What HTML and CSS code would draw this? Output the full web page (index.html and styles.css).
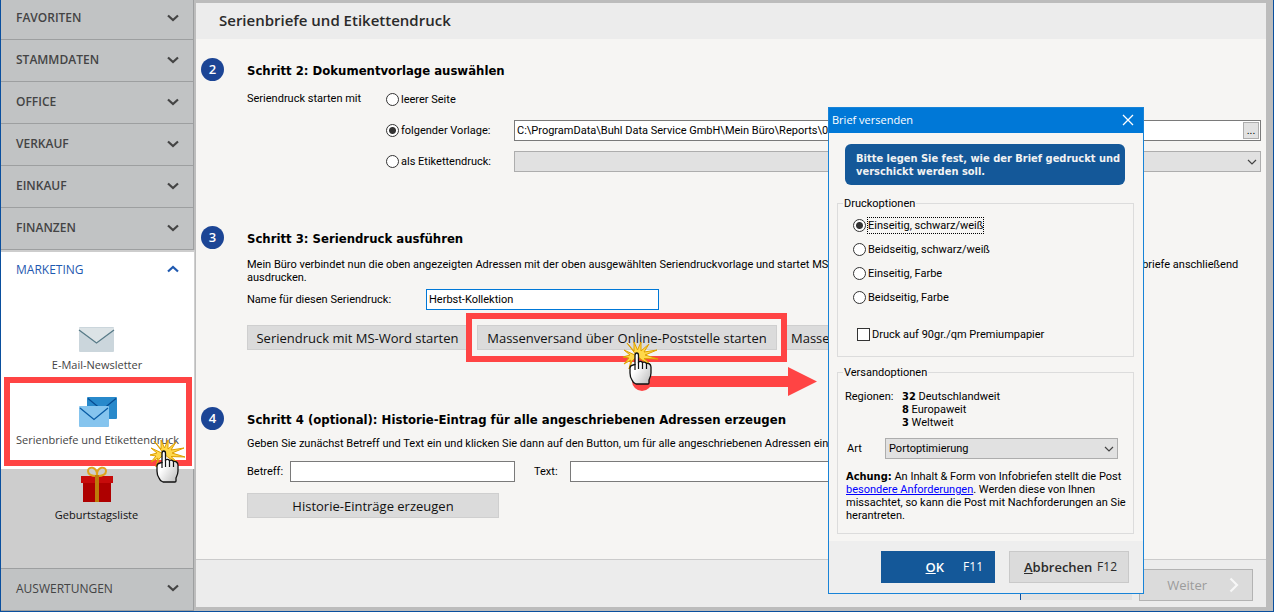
FILE: index.html
```html
<!DOCTYPE html>
<html lang="de">
<head>
<meta charset="utf-8">
<title>Serienbriefe und Etikettendruck</title>
<link rel="stylesheet" href="styles.css">
</head>
<body>
<svg class="defs" width="0" height="0" aria-hidden="true">
  <defs>
    <linearGradient id="skin" x1="0" y1="0" x2="1" y2="1"><stop offset="0.4" stop-color="#fff"/><stop offset="1" stop-color="#b9b9b9"/></linearGradient>
    <symbol id="down" viewBox="0 0 12 8"><path d="M1 1.500L6 6L11 1.500" fill="none" stroke="currentColor" stroke-width="2.200"/></symbol>
    <symbol id="thin" viewBox="0 0 10 6"><path d="M1 1L5 5L9 1" fill="none" stroke="currentColor" stroke-width="1.200"/></symbol>
    <symbol id="click" viewBox="0 0 36 44">
      <path d="M14 14L4 1L11 9L11 0L14.500 8L18 0L18 9L26 2L21 10L34 8L22 13L35 17L21 16.500L28 23L19 18L14 14L9 19L6 27L8 18L1 22L6 16L0 15L7 13L1 8Z" fill="#ffd84a" stroke="#dfa000" stroke-width="1"/>
      <path d="M12 13.500Q12 11 13.800 11Q15.500 11 15.500 13.500V20Q18 18.500 19.500 20.500Q22 19.500 23.500 21.500Q27.500 21 28 25V31Q28 34 26 38V41Q26 42 25 42H13Q10 41 9 38Q7 35 7 31V26Q7 23.500 10 23L12 22.500Z" fill="url(#skin)" stroke="#111" stroke-width="1.300"/>
      <path d="M12 22V28M15.500 20V27M19.500 20.500V27M23.500 21.500V27" stroke="#111" stroke-width="1.200" fill="none"/>
    </symbol>
  </defs>
</svg>
<div class="app">
  <nav class="sidebar">
    <button class="group">FAVORITEN<svg><use href="#down"/></svg></button>
    <button class="group">STAMMDATEN<svg><use href="#down"/></svg></button>
    <button class="group">OFFICE<svg><use href="#down"/></svg></button>
    <button class="group">VERKAUF<svg><use href="#down"/></svg></button>
    <button class="group">EINKAUF<svg><use href="#down"/></svg></button>
    <button class="group">FINANZEN<svg><use href="#down"/></svg></button>
    <section class="open">
      <button class="group active">MARKETING<svg class="up"><use href="#down"/></svg></button>
      <a class="entry first" href="#newsletter">
        <svg class="pic" viewBox="0 0 38 30"><rect x="1" y="3" width="35" height="25" rx="1" fill="#cbd6dc"/><path d="M1 4V6L18.500 19L36 6V4Z" fill="#dce3e6"/><path d="M1 6L18.500 19L36 6" fill="none" stroke="#587b88" stroke-width="1.300"/></svg>
        E-Mail-Newsletter</a>
      <a class="entry marked" href="#serienbriefe">
        <svg class="pic" viewBox="0 0 38 30"><rect x="8" y="0" width="30" height="22" rx="1" fill="#2889cb"/><path d="M9 1.500L23 13L37 1.500" fill="none" stroke="#064b91" stroke-width="1.200"/><rect x="0" y="9" width="30" height="21" rx="1" fill="#85c4ee"/><path d="M1 11L15 22.500L29 11" fill="none" stroke="#075aa4" stroke-width="1.300"/></svg>
        Serienbriefe und Etikettendruck
        <svg class="pointer"><use href="#click"/></svg></a>
    </section>
    <section class="rest">
      <a class="entry dark" href="#geburtstage">
        <svg class="pic gift" viewBox="0 0 34 36"><rect x="1" y="10" width="32" height="7" fill="#c70b0b"/><rect x="3" y="17" width="28" height="19" fill="#ae0000"/><path d="M17 10C13 10 8 9 8 5C8 0 17 0 17 9C17 0 26 0 26 5C26 9 21 10 17 10Z" fill="none" stroke="#dfa31c" stroke-width="2"/><rect x="15" y="9" width="4" height="27" fill="#bd7c0a"/></svg>
        Geburtstagsliste</a>
    </section>
    <button class="group last">AUSWERTUNGEN<svg><use href="#down"/></svg></button>
  </nav>

  <main class="main">
    <header class="title"><h1>Serienbriefe und Etikettendruck</h1></header>
    <div class="steps">
      <section class="step two">
        <span class="num">2</span>
        <div class="body">
          <h2>Schritt 2: Dokumentvorlage auswählen</h2>
          <div class="source">
            <span class="lead">Seriendruck starten mit</span>
            <label class="opt"><input type="radio" name="src">leerer Seite</label><span></span>
            <label class="opt r2"><input type="radio" name="src" checked>folgender Vorlage:</label>
            <div class="file"><input type="text" aria-label="Vorlage" value="C:\ProgramData\Buhl Data Service GmbH\Mein Büro\Reports\0\MSWord\Serienbrief.dot"><button aria-label="Durchsuchen">...</button></div>
            <label class="opt r2"><input type="radio" name="src">als Etikettendruck:</label>
            <div class="drop"><select aria-label="Etikett"><option></option></select><svg><use href="#thin"/></svg></div>
          </div>
        </div>
      </section>
      <section class="step three">
        <span class="num">3</span>
        <div class="body">
          <h2>Schritt 3: Seriendruck ausführen</h2>
          <p>Mein Büro verbindet nun die oben angezeigten Adressen mit der oben ausgewählten Seriendruckvorlage und startet MS-Word. Sie können die in MS-Word dann erstellten fertigen Serienbriefe anschließend ausdrucken.</p>
          <div class="line name"><label for="nm">Name für diesen Seriendruck:</label><input id="nm" class="field focus" type="text" value="Herbst-Kollektion"></div>
          <div class="line actions">
            <button class="btn word">Seriendruck mit MS-Word starten</button>
            <div class="target">
              <button class="btn mass">Massenversand über Online-Poststelle starten</button>
              <span class="frame"></span>
              <svg class="arrow" viewBox="0 0 186 32"><circle cx="11" cy="15" r="10" fill="#ff4444"/><path d="M11 10H157V1L186 15.500L157 30V21H11Z" fill="#ff4444"/></svg>
              <svg class="pointer"><use href="#click"/></svg>
            </div>
            <button class="btn mail">Massenversand per E-Mail starten</button>
          </div>
        </div>
      </section>
      <section class="step four">
        <span class="num">4</span>
        <div class="body">
          <h2>Schritt 4 (optional): Historie-Eintrag für alle angeschriebenen Adressen erzeugen</h2>
          <p>Geben Sie zunächst Betreff und Text ein und klicken Sie dann auf den Button, um für alle angeschriebenen Adressen einen Eintrag zu erzeugen.</p>
          <div class="line texts"><label for="bt">Betreff:</label><input id="bt" class="field subj" type="text"><label class="tl" for="tx">Text:</label><input id="tx" class="field long" type="text"></div>
          <button class="btn hist">Historie-Einträge erzeugen</button>
        </div>
      </section>
    </div>
    <footer class="foot"><button class="back" aria-label="Zurück"></button><button class="next" disabled>Weiter<svg viewBox="0 0 10 16"><path d="M1.500 1.500L8 8L1.500 14.500" fill="none" stroke="#f7f7f7" stroke-width="2.200"/></svg></button></footer>
  </main>

  <div class="dialog" role="dialog" aria-labelledby="dt">
    <div class="bar"><span id="dt">Brief versenden</span><button aria-label="Schließen"><svg viewBox="0 0 12 12"><path d="M1 1L11 11M11 1L1 11" stroke="#fff" stroke-width="1.300"/></svg></button></div>
    <div class="inner">
      <p class="banner">Bitte legen Sie fest, wie der Brief gedruckt und verschickt werden soll.</p>
      <fieldset class="print">
        <legend>Druckoptionen</legend>
        <label class="opt"><input type="radio" name="pr" checked><span class="dotted">Einseitig, schwarz/weiß</span></label>
        <label class="opt"><input type="radio" name="pr">Beidseitig, schwarz/weiß</label>
        <label class="opt"><input type="radio" name="pr">Einseitig, Farbe</label>
        <label class="opt"><input type="radio" name="pr">Beidseitig, Farbe</label>
        <label class="opt check"><input type="checkbox">Druck auf 90gr./qm Premiumpapier</label>
      </fieldset>
      <fieldset class="ship">
        <legend>Versandoptionen</legend>
        <div class="regions"><span>Regionen:</span><div><b>32</b> Deutschlandweit<br><b>8</b> Europaweit<br><b>3</b> Weltweit</div></div>
        <div class="kind"><label for="art">Art</label><div class="drop"><select id="art"><option>Portoptimierung</option></select><svg><use href="#thin"/></svg></div></div>
        <p class="note"><b>Achung:</b> An Inhalt &amp; Form von Infobriefen stellt die Post <a href="#anforderungen">besondere Anforderungen</a>. Werden diese von Ihnen missachtet, so kann die Post mit Nachforderungen an Sie herantreten.</p>
      </fieldset>
    </div>
    <div class="dfoot"><button class="ok"><span><u>O</u>K</span><small>F11</small></button><button class="cancel"><span><u>A</u>bbrechen</span><small>F12</small></button></div>
  </div>
</div>
</body>
</html>
```
FILE: styles.css
```css
* { box-sizing: border-box; }
body { margin: 0; font: 11px/13px Roboto, "Noto Sans", sans-serif; color: #000; background: #f6f5f3; }
button, input, select { font: inherit; color: inherit; margin: 0; padding: 0; border-radius: 0; }
h1, h2, p { margin: 0; }
h2, b, .banner { font-family: "DejaVu Sans Condensed", "Noto Sans", sans-serif; }
.defs { position: absolute; }
.app { position: relative; display: flex; min-height: 100vh; overflow: hidden; border: solid #0a4f9e; border-width: 0 1px 1px; }

/* navigation */
.sidebar { flex: none; width: 195px; display: flex; flex-direction: column; margin-top: -2px; background: #cdcdcd; border-right: 2px solid #bdbdbd; font-family: "Open Sans", sans-serif; }
.group { flex: none; display: flex; align-items: center; justify-content: space-between; height: 42px; padding: 0 14px 2px 15px; border: 0; border-right: 1px solid #9d9fa0; border-bottom: 1px solid #9d9fa0; background: #c1c3c4; font-size: 12px; font-weight: 600; color: #444; text-align: left; }
.group svg { width: 12px; height: 8px; }
.group .up { transform: rotate(180deg); }
.group.active { width: 100%; padding: 0 15px 4px; border: 0; background: none; font-weight: 500; color: #1f59b0; }
.group.last { height: 43px; margin-top: auto; padding-bottom: 3px; border-top: 1px solid #9d9fa0; font-weight: 500; }
.open { background: #fff; margin-right: -1px; border-right: 1px solid #cfcfcf; border-top: 2px solid #cdcdcd; padding-bottom: 3px; }
.open .group { margin-top: -2px; }
.entry { position: relative; display: flex; flex-direction: column; align-items: center; height: 75px; padding-right: 1px; font-size: 11px; line-height: 18px; color: #444; text-decoration: none; white-space: nowrap; }
.entry.first { height: 88px; padding-top: 32px; }
.pic { width: 38px; height: 30px; margin-bottom: 4px; }
.entry.first .pic { margin-bottom: 2px; }
.entry.marked { height: 89px; outline: 6px solid #ff4444; outline-offset: -6px; margin: -3px 2px 0 3px; padding-top: 20px; }
.entry.dark { color: #111; margin-top: -3px; }
.pic.gift { width: 34px; height: 36px; margin-bottom: 4px; }
.pointer { position: absolute; width: 36px; height: 44px; z-index: 2; pointer-events: none; }
.entry .pointer { left: 146px; top: 63px; }
.rest { border-right: 1px solid #9d9fa0; flex: 1; }

/* wizard */
.main { flex: 1; min-width: 0; display: flex; flex-direction: column; border: solid #bcbcbc; border-width: 3px 7px 4px 0; }
.title { height: 36px; padding: 0 23px; background: #ececec; }
h1 { font: 600 15px/34px "Open Sans", sans-serif; color: #2a2a2a; }
.steps { flex: 1; padding: 19px 5px 24px; }
.step { display: flex; gap: 23px; }
.num { flex: none; width: 23px; height: 23px; border-radius: 50%; background: #1c4595; color: #fff; text-align: center; font: 600 13px/22px "Open Sans", sans-serif; }
.body { flex: 1; min-width: 0; }
h2 { font-size: 13px; line-height: 26px; font-weight: 700; }
.two { height: 168px; }
.three { height: 181px; }
.source { display: grid; grid-template-columns: 139px 128px 1fr; row-gap: 10px; align-items: center; padding-top: 5px; }
.source > * { min-height: 21px; }
.lead { line-height: 19px; }
.r2 { grid-column: 2; }
.opt { display: flex; align-items: center; gap: 2px; white-space: nowrap; }
.opt input { appearance: none; flex: none; width: 13px; height: 13px; border: 1px solid #333; background: #fff; }
.opt [type=radio] { border-radius: 50%; }
.opt [type=radio]:checked { background: radial-gradient(circle, #333 0 3px, #fff 4px); }
.file { display: flex; align-items: center; height: 21px; padding-right: 1px; border: 1px solid #7a7a7a; background: #fff; }
.file input { flex: 1; min-width: 0; border: 0; padding-left: 2px; background: none; }
.file button { width: 16px; height: 17px; border: 1px solid #adadad; background: #e1e1e1; line-height: 10px; }
.drop { position: relative; height: 21px; }
.drop select { appearance: none; display: block; width: 100%; height: 100%; padding: 0 3px; border: 1px solid #adadad; background: #e1e1e1; }
.drop svg { position: absolute; right: 4px; top: 8px; width: 10px; height: 6px; color: #444; pointer-events: none; }
.field { height: 21px; padding: 0 2px; border: 1px solid #7a7a7a; background: #fff; }
.line { display: flex; align-items: center; }
.three p { padding: 6px 0 5px; max-width: 1005px; }
.name label { width: 179px; }
.focus { width: 233px; border-color: #0078d7; }
.actions { gap: 9px; padding-top: 15px; }
.btn { height: 25px; border: 1px solid #cfcfcf; background: #dbdbdb; font: 500 13px/18px "Open Sans", sans-serif; color: #111; white-space: nowrap; }
.word { width: 221px; }
.mass { width: 300px; }
.mail { width: 230px; padding-left: 4px; text-align: left; }
.target { position: relative; flex: none; }
.frame { position: absolute; inset: -12px -10px -12px -11px; border: 6px solid #ff4444; pointer-events: none; }
.arrow { position: absolute; left: 154px; top: 41px; width: 186px; height: 32px; pointer-events: none; }
.target .pointer { left: 146px; top: 17px; }
.four p { padding: 4px 0 11px; white-space: nowrap; }
.subj { width: 225px; }
.texts label { width: 43px; }
.texts .tl { width: 55px; padding-left: 19px; }
.long { width: 400px; }
.hist { width: 252px; margin-top: 11px; }
.foot { display: flex; gap: 7px; justify-content: flex-end; height: 48px; padding: 9px 13px 0; border-top: 1px solid #cbcbcb; background: #ececec; }
.back { width: 112px; height: 31px; border: 0; border-left: 1px solid #0a4f9e; background: #e2e2e2; }
.next { display: flex; align-items: center; justify-content: flex-end; gap: 22px; width: 114px; height: 32px; padding-right: 13px; border: 1px solid #b3b3b3; background: #dbdbdb; font: 500 13px/18px "Open Sans", sans-serif; color: #9b9b9b; }
.next svg { width: 10px; height: 16px; }

/* dialog */
.dialog { position: absolute; z-index: 3; right: 129px; top: 107px; width: 316px; border: 1px solid #1883d7; background: #f6f5f3; }
.bar { display: flex; align-items: center; justify-content: space-between; height: 25px; padding: 0 9px 2px 3px; background: #0078d7; color: #fff; font: 11px/16px "Open Sans", sans-serif; }
.bar button { width: 12px; height: 12px; border: 0; background: none; }
.bar svg { display: block; width: 12px; height: 12px; }
.inner { padding: 11px 9px 7px 8px; }
.banner { margin: 0 9px 12px 8px; padding: 8px 4px 7px 11px; border-radius: 6px; background: #145899; color: #f2f2f2; font-weight: 700; }
fieldset { min-width: 0; margin: 0; border: 1px solid #dcdcdc; padding: 0; }
legend { padding: 0 1px; }
.print legend { margin-left: -10px; }
.ship legend { margin-left: -3px; }
.print { height: 160px; padding: 3px 15px; }
.print .opt { height: 24px; }
.dotted { padding: 1px 0; outline: 1px dotted #000; }
.print .check { margin: 13px 0 0 4px; }
.ship { margin-top: 9px; height: 168px; padding: 11px 0 0 8px; }
.regions { display: flex; }
.regions span { width: 57px; }
.regions span, .kind label { margin-left: -1px; }
.kind { display: flex; align-items: center; margin: 9px 15px 11px 0; }
.kind label { width: 40px; padding-left: 2px; }
.kind .drop { flex: 1; }
.note { max-width: 282px; }
a { color: #00f; }
.dfoot { display: flex; justify-content: flex-end; gap: 14px; padding: 10px 14px; background: #eee; }
.dfoot button { display: flex; align-items: center; height: 32px; font: 600 13px/18px "Open Sans", sans-serif; }
.dfoot small { font-size: 12px; font-weight: 400; }
.ok { width: 114px; justify-content: flex-end; gap: 19px; padding-right: 12px; border: 0; background: #145899; color: #fff; }
.cancel { width: 120px; justify-content: space-between; padding: 0 11px 0 14px; border: 1px solid #c9c9c9; background: #dbdbdb; color: #2b2b2b; }
```
